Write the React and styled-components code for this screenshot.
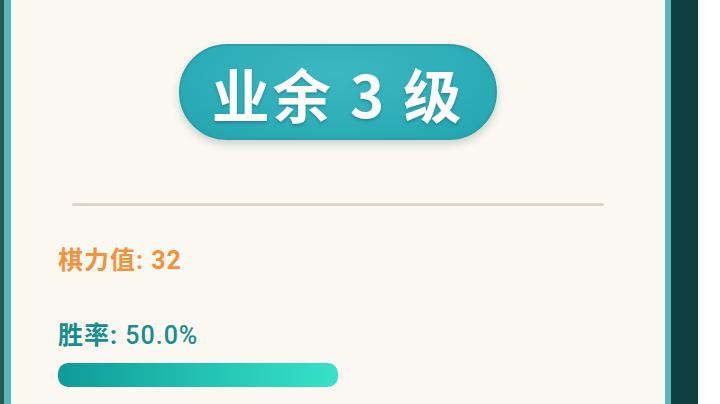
import React from "react";
import styled, { createGlobalStyle } from "styled-components";

const GlobalStyle = createGlobalStyle`
  html, body {
    margin: 0;
    padding: 0;
    background: #ffffff;
    overflow: hidden;
  }
  body {
    font-family: "Roboto", "Noto Sans CJK SC", sans-serif;
  }
`;

const Frame = styled.div`
  width: 698px;
  height: 404px;
  box-sizing: border-box;
  display: flex;
  padding: 0 27px 0 4px;
  background: linear-gradient(90deg, #2d5954 0%, #164a49 50%, #0e3f41 100%);
`;

const Panel = styled.div`
  flex: 1;
  display: flex;
  flex-direction: column;
  background: #fbf8f1;
  border-left: 7px solid #5ab7b9;
  border-right: 6px solid #5ab7b9;
  padding: 44px 47px 0 47px;
`;

const BadgeRow = styled.div`
  display: flex;
  justify-content: center;
`;

const Badge = styled.div`
  width: 318px;
  height: 96px;
  box-sizing: border-box;
  border-radius: 48px;
  border: 2px solid #2a9fa9;
  background: radial-gradient(ellipse at 50% 30%, #3bb8c1 0%, #2eaeb8 55%, #23a3ae 100%);
  box-shadow: 0 4px 8px rgba(20, 70, 70, 0.22);
  display: flex;
  align-items: center;
  justify-content: center;
  padding-top: 2px;
  color: #ffffff;
  font-family: "Noto Sans CJK SC", sans-serif;
  font-size: 58px;
  font-weight: 700;
  letter-spacing: 3px;
  white-space: pre;
  text-shadow: 0 2px 3px rgba(0, 60, 70, 0.3);
`;

const Divider = styled.div`
  height: 3px;
  background: #ddd6c8;
  margin: 63px 14px 0 14px;
  border-radius: 2px;
`;

const Stat = styled.div`
  display: flex;
  align-items: baseline;
  font-size: 25px;
  font-weight: 700;
  letter-spacing: 1px;
  color: ${(p) => p.color};
  margin-top: ${(p) => p.top}px;
  line-height: 30px;
  white-space: pre;
`;

const Value = styled.span`
  font-weight: ${(p) => p.weight || 700};
`;

const Track = styled.div`
  margin-top: 12px;
  height: 24px;
  width: 100%;
`;

const Fill = styled.div`
  height: 100%;
  border-radius: 10px;
  background: linear-gradient(90deg, #0f9a99 0%, #22c1b2 50%, #37e2c9 100%);
`;

export default function App() {
  const winRate = 50.0;
  return (
    <>
      <GlobalStyle />
      <Frame>
        <Panel>
          <BadgeRow>
            <Badge>{"业余 3 级"}</Badge>
          </BadgeRow>
          <Divider />
          <Stat color="#f2923a" top={40}>
            {"棋力值: "}<Value>32</Value>
          </Stat>
          <Stat color="#168e90" top={45}>
            {"胜率: "}<Value weight={500}>{winRate.toFixed(1)}%</Value>
          </Stat>
          <Track>
            <Fill style={{ width: `${winRate}%` }} />
          </Track>
        </Panel>
      </Frame>
    </>
  );
}
